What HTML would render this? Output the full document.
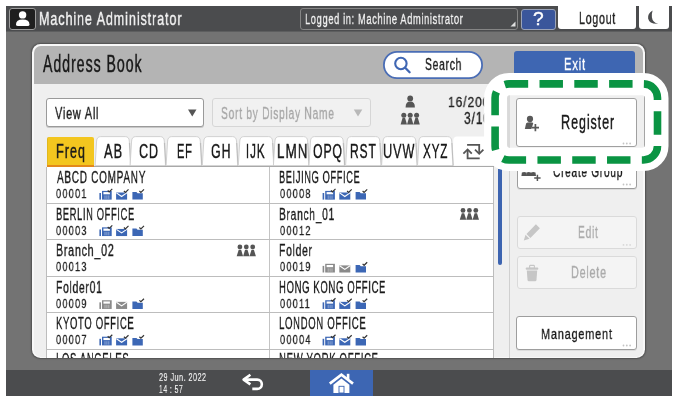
<!DOCTYPE html><html><head><meta charset="utf-8"><style>
html,body{margin:0;padding:0;width:675px;height:400px;overflow:hidden;background:#fff;}
body{position:relative;font-family:"Liberation Sans",sans-serif;}
.t{position:absolute;white-space:nowrap;line-height:1;transform-origin:0 0;will-change:transform;}
svg{position:absolute;left:0;top:0;}
</style></head><body>
<div style="position:absolute;left:6px;top:6px;width:666px;height:390px;background:#737373;"></div>
<div style="position:absolute;left:6px;top:6px;width:666px;height:25px;background:#4b4c4e;"></div>
<div style="position:absolute;left:6px;top:31px;width:666px;height:1px;background:#5d5e5f;"></div>
<div style="position:absolute;left:9px;top:8px;width:27px;height:22px;background:#1f1f1f;border:1px solid #9c9c9c;border-radius:3px;box-sizing:border-box;"></div>
<svg width="675" height="400"><circle cx="22.6" cy="14.9" r="3.7" fill="#fff"/><path d="M16 24.6 Q16 19.6 22.7 19.6 Q29.5 19.6 29.5 24.6 Q29.5 26.1 27.5 26.1 H18 Q16 26.1 16 24.6 Z" fill="#fff"/></svg>
<div class="t" style="left:38.69px;top:9.65px;font-size:18.84px;letter-spacing:1.32px;transform:scaleX(0.6702);-webkit-text-stroke:0.40px currentColor;color:#f2f2f2;">Machine Administrator</div>
<div style="position:absolute;left:300px;top:8px;width:218px;height:22px;border:1px solid #858585;border-radius:3px;box-sizing:border-box;"></div>
<div class="t" style="left:304.86px;top:11.60px;font-size:14.06px;letter-spacing:0.98px;transform:scaleX(0.6604);-webkit-text-stroke:0.30px currentColor;color:#f2f2f2;">Logged in: Machine Administrator</div>
<svg width="675" height="400"><path d="M515.5 21.5 L515.5 26.5 L510.5 26.5 Z" fill="#e0e0e0"/></svg>
<div style="position:absolute;left:521px;top:8.5px;width:35px;height:21.0px;background:#3a569b;border:1px solid #9aa3b8;border-radius:3px;box-sizing:border-box;"></div>
<div class="t" style="left:532.93px;top:10.14px;font-size:18.26px;letter-spacing:1.28px;transform:scaleX(1.0491);-webkit-text-stroke:0.38px currentColor;color:#fff;">?</div>
<div style="position:absolute;left:558px;top:6px;width:77.5px;height:23px;background:#fff;border-radius:0 0 3px 3px;"></div>
<div class="t" style="left:578.75px;top:9.86px;font-size:16.23px;letter-spacing:1.14px;transform:scaleX(0.6560);-webkit-text-stroke:0.34px currentColor;color:#222;">Logout</div>
<div style="position:absolute;left:638.5px;top:6px;width:30.0px;height:23px;background:#fff;border-radius:0 0 3px 3px;"></div>
<svg width="675" height="400"><path d="M652.6 10.4 Q647.2 14 648.1 18.6 Q649.3 24.3 658.2 23.8 Q652.6 22.6 651.9 17.2 Q651.6 13.4 652.6 10.4 Z" fill="#4b4c4e"/></svg>
<div style="position:absolute;left:32.3px;top:43.8px;width:612.7px;height:314.2px;background:#f8f8f8;border-radius:8.5px;box-shadow:0 0 1.5px 0.5px rgba(0,0,0,0.3);"></div>
<div style="position:absolute;left:34px;top:45.6px;width:609.4px;height:311.0px;background:#efefef;border-radius:7px;"></div>
<div style="position:absolute;left:34px;top:45.6px;width:609.4px;height:38.4px;background:#b4b4b4;border-radius:7px 7px 0 0;"></div>
<div class="t" style="left:43.00px;top:52.85px;font-size:23.33px;letter-spacing:1.63px;transform:scaleX(0.6039);-webkit-text-stroke:0.49px currentColor;color:#1a1a1a;">Address Book</div>
<svg width="675" height="400"><rect x="383.9" y="51.9" width="98.2" height="26.2" rx="13.1" fill="#fff" stroke="#4a6db5" stroke-width="1.8"/></svg>
<svg width="675" height="400"><circle cx="400.9" cy="63.5" r="5.7" fill="none" stroke="#3f66b3" stroke-width="2.1"/><path d="M405.2 67.8 L409.6 72.2" stroke="#3f66b3" stroke-width="2.3" stroke-linecap="round"/></svg>
<div class="t" style="left:425.14px;top:56.51px;font-size:15.94px;letter-spacing:1.12px;transform:scaleX(0.6476);-webkit-text-stroke:0.33px currentColor;color:#222;">Search</div>
<div style="position:absolute;left:514.3px;top:50.8px;width:121.0px;height:28.200000000000003px;background:#3e66b2;border-radius:3px;"></div>
<div class="t" style="left:563.79px;top:56.12px;font-size:17.10px;letter-spacing:1.20px;transform:scaleX(0.6617);-webkit-text-stroke:0.36px currentColor;color:#fff;">Exit</div>
<div style="position:absolute;left:508.5px;top:84px;width:1.5px;height:274px;background:#d0d0d0;"></div>
<div style="position:absolute;left:46px;top:98px;width:158px;height:29px;background:#fff;border:1px solid #9a9a9a;border-radius:3px;box-sizing:border-box;box-shadow:0 1px 0 #c8c8c8;"></div>
<div class="t" style="left:54.65px;top:104.96px;font-size:16.23px;letter-spacing:1.14px;transform:scaleX(0.6738);-webkit-text-stroke:0.34px currentColor;color:#222;">View All</div>
<svg width="675" height="400"><path d="M188 109.5 L196.5 109.5 L192.25 116.5 Z" fill="#555"/></svg>
<div style="position:absolute;left:212px;top:98px;width:159px;height:29px;background:#f1f1f1;border:1px solid #d6d6d6;border-radius:3px;box-sizing:border-box;"></div>
<div class="t" style="left:220.54px;top:104.96px;font-size:16.23px;letter-spacing:1.14px;transform:scaleX(0.6327);-webkit-text-stroke:0.34px currentColor;color:#a8a8a8;">Sort by Display Name</div>
<svg width="675" height="400"><path d="M353.8 109.5 L362.3 109.5 L358 116.5 Z" fill="#b8b8b8"/></svg>
<svg width="675" height="400" fill="#555">
<circle cx="410.2" cy="98.4" r="2.9"/><path d="M405.6 107.4 Q405.6 101.6 410.2 101.6 Q414.9 101.6 414.9 107.4 Z"/>
<circle cx="403.8" cy="115.3" r="2.5"/><circle cx="410.2" cy="115.3" r="2.5"/><circle cx="416.6" cy="115.3" r="2.5"/>
<path d="M400.6 124.6 L402.6 117.8 L405 117.8 L407 124.6 Z M407 124.6 L409 117.8 L411.4 117.8 L413.4 124.6 Z M413.4 124.6 L415.4 117.8 L417.8 117.8 L419.8 124.6 Z"/>
</svg>
<div class="t" style="left:448.49px;top:94.80px;font-size:14.06px;letter-spacing:0.98px;transform:scaleX(0.8657);-webkit-text-stroke:0.30px currentColor;color:#222;">16/200</div>
<div class="t" style="left:464.02px;top:109.88px;font-size:16.09px;letter-spacing:1.13px;transform:scaleX(0.7489);-webkit-text-stroke:0.34px currentColor;color:#222;">3/10</div>
<div style="position:absolute;left:46.7px;top:136.8px;width:47.099999999999994px;height:30.399999999999977px;background:#f3c61f;border-radius:2px 2px 0 0;box-shadow:inset 0 -1.9px 0 #e3891b, inset 0.6px 0 0 rgba(0,0,0,0.12);"></div>
<div class="t" style="left:55.58px;top:141.42px;font-size:20.29px;letter-spacing:1.42px;transform:scaleX(0.6300);-webkit-text-stroke:0.43px currentColor;color:#1a1a1a;">Freq</div>
<svg width="675" height="400"><path d="M452.2 165.6 L453.3 140 Q453.6 136.4 457 136.4 H494 V165.6 Z" fill="#fff"/><path d="M95.10000000000001 165.6 L96.60000000000001 141 Q96.9 136.6 100.7 136.6 H125.19999999999999 Q129.0 136.6 129.29999999999998 141 L130.79999999999998 165.6 Z" fill="#fff" stroke="#cdcdcd" stroke-width="0.9"/><path d="M129.5 143 L130.7 165.6" stroke="rgba(0,0,0,0.10)" stroke-width="1.6"/><path d="M130.1 165.6 L131.6 141 Q131.89999999999998 136.6 135.7 136.6 H160.2 Q164.0 136.6 164.29999999999998 141 L165.79999999999998 165.6 Z" fill="#fff" stroke="#cdcdcd" stroke-width="0.9"/><path d="M164.5 143 L165.7 165.6" stroke="rgba(0,0,0,0.10)" stroke-width="1.6"/><path d="M166.1 165.6 L167.6 141 Q167.89999999999998 136.6 171.7 136.6 H196.2 Q200.0 136.6 200.29999999999998 141 L201.79999999999998 165.6 Z" fill="#fff" stroke="#cdcdcd" stroke-width="0.9"/><path d="M200.5 143 L201.7 165.6" stroke="rgba(0,0,0,0.10)" stroke-width="1.6"/><path d="M202.3 165.6 L203.8 141 Q204.1 136.6 207.9 136.6 H232.4 Q236.20000000000002 136.6 236.5 141 L238.0 165.6 Z" fill="#fff" stroke="#cdcdcd" stroke-width="0.9"/><path d="M236.70000000000002 143 L237.9 165.6" stroke="rgba(0,0,0,0.10)" stroke-width="1.6"/><path d="M238.3 165.6 L239.8 141 Q240.1 136.6 243.9 136.6 H268.4 Q272.2 136.6 272.5 141 L274.0 165.6 Z" fill="#fff" stroke="#cdcdcd" stroke-width="0.9"/><path d="M272.7 143 L273.9 165.6" stroke="rgba(0,0,0,0.10)" stroke-width="1.6"/><path d="M273.4 165.6 L274.9 141 Q275.2 136.6 279 136.6 H303.5 Q307.3 136.6 307.6 141 L309.1 165.6 Z" fill="#fff" stroke="#cdcdcd" stroke-width="0.9"/><path d="M307.8 143 L309.0 165.6" stroke="rgba(0,0,0,0.10)" stroke-width="1.6"/><path d="M309.0 165.6 L310.5 141 Q310.8 136.6 314.6 136.6 H339.1 Q342.90000000000003 136.6 343.20000000000005 141 L344.70000000000005 165.6 Z" fill="#fff" stroke="#cdcdcd" stroke-width="0.9"/><path d="M343.40000000000003 143 L344.6 165.6" stroke="rgba(0,0,0,0.10)" stroke-width="1.6"/><path d="M345.59999999999997 165.6 L347.09999999999997 141 Q347.4 136.6 351.2 136.6 H375.7 Q379.5 136.6 379.8 141 L381.3 165.6 Z" fill="#fff" stroke="#cdcdcd" stroke-width="0.9"/><path d="M380.0 143 L381.2 165.6" stroke="rgba(0,0,0,0.10)" stroke-width="1.6"/><path d="M381.59999999999997 165.6 L383.09999999999997 141 Q383.4 136.6 387.2 136.6 H411.7 Q415.5 136.6 415.8 141 L417.3 165.6 Z" fill="#fff" stroke="#cdcdcd" stroke-width="0.9"/><path d="M416.0 143 L417.2 165.6" stroke="rgba(0,0,0,0.10)" stroke-width="1.6"/><path d="M417.5 165.6 L419.0 141 Q419.3 136.6 423.1 136.6 H447.6 Q451.40000000000003 136.6 451.70000000000005 141 L453.20000000000005 165.6 Z" fill="#fff" stroke="#cdcdcd" stroke-width="0.9"/><path d="M451.90000000000003 143 L453.1 165.6" stroke="rgba(0,0,0,0.10)" stroke-width="1.6"/></svg>
<div class="t" style="left:104.00px;top:141.38px;font-size:20.58px;letter-spacing:1.44px;transform:scaleX(0.6250);-webkit-text-stroke:0.43px currentColor;color:#1a1a1a;">AB</div>
<div class="t" style="left:138.77px;top:141.38px;font-size:20.58px;letter-spacing:1.44px;transform:scaleX(0.6134);-webkit-text-stroke:0.43px currentColor;color:#1a1a1a;">CD</div>
<div class="t" style="left:176.81px;top:141.38px;font-size:20.58px;letter-spacing:1.44px;transform:scaleX(0.5377);-webkit-text-stroke:0.43px currentColor;color:#1a1a1a;">EF</div>
<div class="t" style="left:210.58px;top:141.38px;font-size:20.58px;letter-spacing:1.44px;transform:scaleX(0.6027);-webkit-text-stroke:0.43px currentColor;color:#1a1a1a;">GH</div>
<div class="t" style="left:246.14px;top:141.38px;font-size:20.58px;letter-spacing:1.44px;transform:scaleX(0.5713);-webkit-text-stroke:0.43px currentColor;color:#1a1a1a;">IJK</div>
<div class="t" style="left:276.82px;top:141.38px;font-size:20.58px;letter-spacing:1.44px;transform:scaleX(0.6572);-webkit-text-stroke:0.43px currentColor;color:#1a1a1a;">LMN</div>
<div class="t" style="left:313.35px;top:141.38px;font-size:20.58px;letter-spacing:1.44px;transform:scaleX(0.5964);-webkit-text-stroke:0.43px currentColor;color:#1a1a1a;">OPQ</div>
<div class="t" style="left:350.24px;top:141.38px;font-size:20.58px;letter-spacing:1.44px;transform:scaleX(0.5850);-webkit-text-stroke:0.43px currentColor;color:#1a1a1a;">RST</div>
<div class="t" style="left:383.35px;top:141.38px;font-size:20.58px;letter-spacing:1.44px;transform:scaleX(0.6160);-webkit-text-stroke:0.43px currentColor;color:#1a1a1a;">UVW</div>
<div class="t" style="left:423.21px;top:141.38px;font-size:20.58px;letter-spacing:1.44px;transform:scaleX(0.5687);-webkit-text-stroke:0.43px currentColor;color:#1a1a1a;">XYZ</div>
<svg width="675" height="400"><g fill="none" stroke="#555" stroke-width="1.8"><path d="M467.1 144.9 L479.2 144.9 L479.2 153"/><path d="M475 149.6 L479.2 153.8 L483.4 149.6"/><path d="M479.7 158.4 L467.6 158.4 L467.6 150"/><path d="M463.4 153.6 L467.6 149.4 L471.8 153.6"/></g></svg>
<div style="position:absolute;left:0;top:0;width:675px;height:357.6px;overflow:hidden">
<div style="position:absolute;left:46px;top:167px;width:448px;height:191px;background:#fff;border-left:1px solid #bdbdbd;border-right:1px solid #bdbdbd;box-sizing:border-box;"></div>
<div style="position:absolute;left:93.8px;top:165.5px;width:400.2px;height:1.5px;background:#a9a9a9;"></div>
<div style="position:absolute;left:269px;top:167px;width:1px;height:191px;background:#c4c4c4;"></div>
<div style="position:absolute;left:46px;top:202.75px;width:448px;height:1.0px;background:#bdbdbd;"></div>
<div style="position:absolute;left:46px;top:239.2px;width:448px;height:1.0px;background:#bdbdbd;"></div>
<div style="position:absolute;left:46px;top:275.65px;width:448px;height:1.0px;background:#bdbdbd;"></div>
<div style="position:absolute;left:46px;top:312.1px;width:448px;height:1.0px;background:#bdbdbd;"></div>
<div style="position:absolute;left:46px;top:348.55px;width:448px;height:1.0px;background:#bdbdbd;"></div>
<div style="position:absolute;left:498px;top:169px;width:4px;height:95.69999999999999px;background:#3d64b0;border-radius:0 0 2px 2px;"></div>
<div class="t" style="left:57.00px;top:170.15px;font-size:15.65px;letter-spacing:1.10px;transform:scaleX(0.6411);-webkit-text-stroke:0.33px currentColor;color:#1a1a1a;">ABCD COMPANY</div>
<div class="t" style="left:56.33px;top:187.21px;font-size:13.33px;letter-spacing:1.73px;transform:scaleX(0.6928);-webkit-text-stroke:0.28px currentColor;color:#222;">00001</div>
<div class="t" style="left:279.46px;top:170.15px;font-size:15.65px;letter-spacing:1.10px;transform:scaleX(0.5896);-webkit-text-stroke:0.33px currentColor;color:#1a1a1a;">BEIJING OFFICE</div>
<div class="t" style="left:279.53px;top:187.21px;font-size:13.33px;letter-spacing:1.73px;transform:scaleX(0.6928);-webkit-text-stroke:0.28px currentColor;color:#222;">00008</div>
<div class="t" style="left:56.26px;top:206.60px;font-size:15.65px;letter-spacing:1.10px;transform:scaleX(0.5949);-webkit-text-stroke:0.33px currentColor;color:#1a1a1a;">BERLIN OFFICE</div>
<div class="t" style="left:56.33px;top:223.66px;font-size:13.33px;letter-spacing:1.73px;transform:scaleX(0.6928);-webkit-text-stroke:0.28px currentColor;color:#222;">00003</div>
<div class="t" style="left:279.38px;top:206.60px;font-size:15.65px;letter-spacing:1.10px;transform:scaleX(0.6541);-webkit-text-stroke:0.33px currentColor;color:#1a1a1a;">Branch_01</div>
<div class="t" style="left:279.53px;top:223.66px;font-size:13.33px;letter-spacing:1.73px;transform:scaleX(0.6928);-webkit-text-stroke:0.28px currentColor;color:#222;">00012</div>
<div class="t" style="left:56.14px;top:243.05px;font-size:15.65px;letter-spacing:1.10px;transform:scaleX(0.6838);-webkit-text-stroke:0.33px currentColor;color:#1a1a1a;">Branch_02</div>
<div class="t" style="left:56.33px;top:260.11px;font-size:13.33px;letter-spacing:1.73px;transform:scaleX(0.6928);-webkit-text-stroke:0.28px currentColor;color:#222;">00013</div>
<div class="t" style="left:279.37px;top:243.05px;font-size:15.65px;letter-spacing:1.10px;transform:scaleX(0.6638);-webkit-text-stroke:0.33px currentColor;color:#1a1a1a;">Folder</div>
<div class="t" style="left:279.53px;top:260.11px;font-size:13.33px;letter-spacing:1.73px;transform:scaleX(0.6928);-webkit-text-stroke:0.28px currentColor;color:#222;">00019</div>
<div class="t" style="left:56.17px;top:279.50px;font-size:15.65px;letter-spacing:1.10px;transform:scaleX(0.6604);-webkit-text-stroke:0.33px currentColor;color:#1a1a1a;">Folder01</div>
<div class="t" style="left:56.33px;top:296.56px;font-size:13.33px;letter-spacing:1.73px;transform:scaleX(0.6928);-webkit-text-stroke:0.28px currentColor;color:#222;">00009</div>
<div class="t" style="left:279.44px;top:279.50px;font-size:15.65px;letter-spacing:1.10px;transform:scaleX(0.6061);-webkit-text-stroke:0.33px currentColor;color:#1a1a1a;">HONG KONG OFFICE</div>
<div class="t" style="left:279.53px;top:296.56px;font-size:13.33px;letter-spacing:1.73px;transform:scaleX(0.6928);-webkit-text-stroke:0.28px currentColor;color:#222;">00011</div>
<div class="t" style="left:56.24px;top:315.95px;font-size:15.65px;letter-spacing:1.10px;transform:scaleX(0.6064);-webkit-text-stroke:0.33px currentColor;color:#1a1a1a;">KYOTO OFFICE</div>
<div class="t" style="left:56.33px;top:333.01px;font-size:13.33px;letter-spacing:1.73px;transform:scaleX(0.6928);-webkit-text-stroke:0.28px currentColor;color:#222;">00007</div>
<div class="t" style="left:279.43px;top:315.95px;font-size:15.65px;letter-spacing:1.10px;transform:scaleX(0.6114);-webkit-text-stroke:0.33px currentColor;color:#1a1a1a;">LONDON OFFICE</div>
<div class="t" style="left:279.53px;top:333.01px;font-size:13.33px;letter-spacing:1.73px;transform:scaleX(0.6928);-webkit-text-stroke:0.28px currentColor;color:#222;">00004</div>
<div class="t" style="left:56.24px;top:352.40px;font-size:15.65px;letter-spacing:1.10px;transform:scaleX(0.6070);-webkit-text-stroke:0.33px currentColor;color:#1a1a1a;">LOS ANGELES</div>
<div class="t" style="left:56.33px;top:369.46px;font-size:13.33px;letter-spacing:1.73px;transform:scaleX(0.6928);-webkit-text-stroke:0.28px currentColor;color:#222;">00010</div>
<div class="t" style="left:279.43px;top:352.40px;font-size:15.65px;letter-spacing:1.10px;transform:scaleX(0.6111);-webkit-text-stroke:0.33px currentColor;color:#1a1a1a;">NEW YORK OFFICE</div>
<div class="t" style="left:279.53px;top:369.46px;font-size:13.33px;letter-spacing:1.73px;transform:scaleX(0.6928);-webkit-text-stroke:0.28px currentColor;color:#222;">00005</div>
<svg width="675" height="400"><rect x="99.4" y="193.0" width="1.6" height="6.6" fill="#3c67b5"/><rect x="102.0" y="190.9" width="9.7" height="8.7" fill="#3c67b5"/><rect x="103.4" y="192.1" width="6.5" height="2.2" fill="#fff"/><path d="M105.0 195.4V198.9 M106.9 195.4V198.9 M108.80000000000001 195.4V198.9" stroke="#fff" stroke-width="0.7" opacity="0.6"/><path d="M107.7 190.5 L109.2 191.9 L112.3 188.9" fill="none" stroke="#333" stroke-width="1.2"/><rect x="116.10000000000001" y="192.5" width="11" height="7.1" fill="#3c67b5"/><path d="M116.4 192.9 L121.60000000000001 196.5 L126.80000000000001 192.9" fill="none" stroke="#fff" stroke-width="1.1"/><path d="M123.9 191.0 L125.4 192.4 L128.5 189.4" fill="none" stroke="#333" stroke-width="1.2"/><path d="M132.4 192.1 L136.4 192.1 L137.6 193.3 L142.8 193.3 L142.8 199.6 L132.4 199.6 Z" fill="#3c67b5"/><path d="M139.4 191.0 L140.9 192.4 L144.0 189.4" fill="none" stroke="#333" stroke-width="1.2"/><rect x="322.59999999999997" y="193.0" width="1.6" height="6.6" fill="#3c67b5"/><rect x="325.2" y="190.9" width="9.7" height="8.7" fill="#3c67b5"/><rect x="326.59999999999997" y="192.1" width="6.5" height="2.2" fill="#fff"/><path d="M328.2 195.4V198.9 M330.09999999999997 195.4V198.9 M331.99999999999994 195.4V198.9" stroke="#fff" stroke-width="0.7" opacity="0.6"/><path d="M330.9 190.5 L332.4 191.9 L335.5 188.9" fill="none" stroke="#333" stroke-width="1.2"/><rect x="339.29999999999995" y="192.5" width="11" height="7.1" fill="#3c67b5"/><path d="M339.59999999999997 192.9 L344.79999999999995 196.5 L349.99999999999994 192.9" fill="none" stroke="#fff" stroke-width="1.1"/><path d="M347.09999999999997 191.0 L348.59999999999997 192.4 L351.7 189.4" fill="none" stroke="#333" stroke-width="1.2"/><path d="M355.59999999999997 192.1 L359.59999999999997 192.1 L360.79999999999995 193.3 L365.99999999999994 193.3 L365.99999999999994 199.6 L355.59999999999997 199.6 Z" fill="#3c67b5"/><path d="M362.59999999999997 191.0 L364.09999999999997 192.4 L367.2 189.4" fill="none" stroke="#333" stroke-width="1.2"/><rect x="99.4" y="229.45" width="1.6" height="6.6" fill="#3c67b5"/><rect x="102.0" y="227.35" width="9.7" height="8.7" fill="#3c67b5"/><rect x="103.4" y="228.54999999999998" width="6.5" height="2.2" fill="#fff"/><path d="M105.0 231.85V235.35 M106.9 231.85V235.35 M108.80000000000001 231.85V235.35" stroke="#fff" stroke-width="0.7" opacity="0.6"/><path d="M107.7 226.95 L109.2 228.35 L112.3 225.35" fill="none" stroke="#333" stroke-width="1.2"/><rect x="116.10000000000001" y="228.95" width="11" height="7.1" fill="#3c67b5"/><path d="M116.4 229.35 L121.60000000000001 232.95 L126.80000000000001 229.35" fill="none" stroke="#fff" stroke-width="1.1"/><path d="M123.9 227.45 L125.4 228.85 L128.5 225.85" fill="none" stroke="#333" stroke-width="1.2"/><path d="M132.4 228.54999999999998 L136.4 228.54999999999998 L137.6 229.75 L142.8 229.75 L142.8 236.04999999999998 L132.4 236.04999999999998 Z" fill="#3c67b5"/><path d="M139.4 227.45 L140.9 228.85 L144.0 225.85" fill="none" stroke="#333" stroke-width="1.2"/><circle cx="463.0" cy="210.45" r="2.4" fill="#555"/><path d="M459.8 219.85 L461.8 213.25 L464.2 213.25 L466.2 219.85 Z" fill="#555"/><circle cx="469.4" cy="210.45" r="2.4" fill="#555"/><path d="M466.2 219.85 L468.2 213.25 L470.59999999999997 213.25 L472.59999999999997 219.85 Z" fill="#555"/><circle cx="475.8" cy="210.45" r="2.4" fill="#555"/><path d="M472.6 219.85 L474.6 213.25 L477.0 213.25 L479.0 219.85 Z" fill="#555"/><circle cx="239.9" cy="246.9" r="2.4" fill="#555"/><path d="M236.70000000000002 256.3 L238.70000000000002 249.70000000000002 L241.1 249.70000000000002 L243.1 256.3 Z" fill="#555"/><circle cx="246.3" cy="246.9" r="2.4" fill="#555"/><path d="M243.10000000000002 256.3 L245.10000000000002 249.70000000000002 L247.5 249.70000000000002 L249.5 256.3 Z" fill="#555"/><circle cx="252.70000000000002" cy="246.9" r="2.4" fill="#555"/><path d="M249.50000000000003 256.3 L251.50000000000003 249.70000000000002 L253.9 249.70000000000002 L255.9 256.3 Z" fill="#555"/><rect x="322.59999999999997" y="265.90000000000003" width="1.6" height="6.6" fill="#8a8a8a"/><rect x="325.2" y="263.8" width="9.7" height="8.7" fill="#8a8a8a"/><rect x="326.59999999999997" y="265.0" width="6.5" height="2.2" fill="#fff"/><path d="M328.2 268.3V271.8 M330.09999999999997 268.3V271.8 M331.99999999999994 268.3V271.8" stroke="#fff" stroke-width="0.7" opacity="0.6"/><rect x="339.29999999999995" y="265.40000000000003" width="11" height="7.1" fill="#8a8a8a"/><path d="M339.59999999999997 265.8 L344.79999999999995 269.40000000000003 L349.99999999999994 265.8" fill="none" stroke="#fff" stroke-width="1.1"/><path d="M355.59999999999997 265.0 L359.59999999999997 265.0 L360.79999999999995 266.2 L365.99999999999994 266.2 L365.99999999999994 272.5 L355.59999999999997 272.5 Z" fill="#3c67b5"/><path d="M362.59999999999997 263.90000000000003 L364.09999999999997 265.3 L367.2 262.3" fill="none" stroke="#333" stroke-width="1.2"/><rect x="99.4" y="302.3500000000001" width="1.6" height="6.6" fill="#8a8a8a"/><rect x="102.0" y="300.25000000000006" width="9.7" height="8.7" fill="#8a8a8a"/><rect x="103.4" y="301.45000000000005" width="6.5" height="2.2" fill="#fff"/><path d="M105.0 304.75000000000006V308.25000000000006 M106.9 304.75000000000006V308.25000000000006 M108.80000000000001 304.75000000000006V308.25000000000006" stroke="#fff" stroke-width="0.7" opacity="0.6"/><rect x="116.10000000000001" y="301.8500000000001" width="11" height="7.1" fill="#8a8a8a"/><path d="M116.4 302.25000000000006 L121.60000000000001 305.8500000000001 L126.80000000000001 302.25000000000006" fill="none" stroke="#fff" stroke-width="1.1"/><path d="M132.4 301.45000000000005 L136.4 301.45000000000005 L137.6 302.65000000000003 L142.8 302.65000000000003 L142.8 308.95000000000005 L132.4 308.95000000000005 Z" fill="#3c67b5"/><path d="M139.4 300.3500000000001 L140.9 301.75000000000006 L144.0 298.75000000000006" fill="none" stroke="#333" stroke-width="1.2"/><rect x="322.59999999999997" y="302.3500000000001" width="1.6" height="6.6" fill="#3c67b5"/><rect x="325.2" y="300.25000000000006" width="9.7" height="8.7" fill="#3c67b5"/><rect x="326.59999999999997" y="301.45000000000005" width="6.5" height="2.2" fill="#fff"/><path d="M328.2 304.75000000000006V308.25000000000006 M330.09999999999997 304.75000000000006V308.25000000000006 M331.99999999999994 304.75000000000006V308.25000000000006" stroke="#fff" stroke-width="0.7" opacity="0.6"/><path d="M330.9 299.8500000000001 L332.4 301.25000000000006 L335.5 298.25000000000006" fill="none" stroke="#333" stroke-width="1.2"/><rect x="339.29999999999995" y="301.8500000000001" width="11" height="7.1" fill="#3c67b5"/><path d="M339.59999999999997 302.25000000000006 L344.79999999999995 305.8500000000001 L349.99999999999994 302.25000000000006" fill="none" stroke="#fff" stroke-width="1.1"/><path d="M347.09999999999997 300.3500000000001 L348.59999999999997 301.75000000000006 L351.7 298.75000000000006" fill="none" stroke="#333" stroke-width="1.2"/><path d="M355.59999999999997 301.45000000000005 L359.59999999999997 301.45000000000005 L360.79999999999995 302.65000000000003 L365.99999999999994 302.65000000000003 L365.99999999999994 308.95000000000005 L355.59999999999997 308.95000000000005 Z" fill="#3c67b5"/><path d="M362.59999999999997 300.3500000000001 L364.09999999999997 301.75000000000006 L367.2 298.75000000000006" fill="none" stroke="#333" stroke-width="1.2"/><rect x="99.4" y="338.80000000000007" width="1.6" height="6.6" fill="#3c67b5"/><rect x="102.0" y="336.70000000000005" width="9.7" height="8.7" fill="#3c67b5"/><rect x="103.4" y="337.90000000000003" width="6.5" height="2.2" fill="#fff"/><path d="M105.0 341.20000000000005V344.70000000000005 M106.9 341.20000000000005V344.70000000000005 M108.80000000000001 341.20000000000005V344.70000000000005" stroke="#fff" stroke-width="0.7" opacity="0.6"/><path d="M107.7 336.30000000000007 L109.2 337.70000000000005 L112.3 334.70000000000005" fill="none" stroke="#333" stroke-width="1.2"/><rect x="116.10000000000001" y="338.30000000000007" width="11" height="7.1" fill="#3c67b5"/><path d="M116.4 338.70000000000005 L121.60000000000001 342.30000000000007 L126.80000000000001 338.70000000000005" fill="none" stroke="#fff" stroke-width="1.1"/><path d="M123.9 336.80000000000007 L125.4 338.20000000000005 L128.5 335.20000000000005" fill="none" stroke="#333" stroke-width="1.2"/><path d="M132.4 337.90000000000003 L136.4 337.90000000000003 L137.6 339.1 L142.8 339.1 L142.8 345.40000000000003 L132.4 345.40000000000003 Z" fill="#3c67b5"/><path d="M139.4 336.80000000000007 L140.9 338.20000000000005 L144.0 335.20000000000005" fill="none" stroke="#333" stroke-width="1.2"/><rect x="322.59999999999997" y="338.80000000000007" width="1.6" height="6.6" fill="#3c67b5"/><rect x="325.2" y="336.70000000000005" width="9.7" height="8.7" fill="#3c67b5"/><rect x="326.59999999999997" y="337.90000000000003" width="6.5" height="2.2" fill="#fff"/><path d="M328.2 341.20000000000005V344.70000000000005 M330.09999999999997 341.20000000000005V344.70000000000005 M331.99999999999994 341.20000000000005V344.70000000000005" stroke="#fff" stroke-width="0.7" opacity="0.6"/><path d="M330.9 336.30000000000007 L332.4 337.70000000000005 L335.5 334.70000000000005" fill="none" stroke="#333" stroke-width="1.2"/><rect x="339.29999999999995" y="338.30000000000007" width="11" height="7.1" fill="#3c67b5"/><path d="M339.59999999999997 338.70000000000005 L344.79999999999995 342.30000000000007 L349.99999999999994 338.70000000000005" fill="none" stroke="#fff" stroke-width="1.1"/><path d="M347.09999999999997 336.80000000000007 L348.59999999999997 338.20000000000005 L351.7 335.20000000000005" fill="none" stroke="#333" stroke-width="1.2"/><path d="M355.59999999999997 337.90000000000003 L359.59999999999997 337.90000000000003 L360.79999999999995 339.1 L365.99999999999994 339.1 L365.99999999999994 345.40000000000003 L355.59999999999997 345.40000000000003 Z" fill="#3c67b5"/><path d="M362.59999999999997 336.80000000000007 L364.09999999999997 338.20000000000005 L367.2 335.20000000000005" fill="none" stroke="#333" stroke-width="1.2"/><rect x="99.4" y="375.25000000000006" width="1.6" height="6.6" fill="#3c67b5"/><rect x="102.0" y="373.15000000000003" width="9.7" height="8.7" fill="#3c67b5"/><rect x="103.4" y="374.35" width="6.5" height="2.2" fill="#fff"/><path d="M105.0 377.65000000000003V381.15000000000003 M106.9 377.65000000000003V381.15000000000003 M108.80000000000001 377.65000000000003V381.15000000000003" stroke="#fff" stroke-width="0.7" opacity="0.6"/><path d="M107.7 372.75000000000006 L109.2 374.15000000000003 L112.3 371.15000000000003" fill="none" stroke="#333" stroke-width="1.2"/><rect x="116.10000000000001" y="374.75000000000006" width="11" height="7.1" fill="#3c67b5"/><path d="M116.4 375.15000000000003 L121.60000000000001 378.75000000000006 L126.80000000000001 375.15000000000003" fill="none" stroke="#fff" stroke-width="1.1"/><path d="M123.9 373.25000000000006 L125.4 374.65000000000003 L128.5 371.65000000000003" fill="none" stroke="#333" stroke-width="1.2"/><path d="M132.4 374.35 L136.4 374.35 L137.6 375.55 L142.8 375.55 L142.8 381.85 L132.4 381.85 Z" fill="#3c67b5"/><path d="M139.4 373.25000000000006 L140.9 374.65000000000003 L144.0 371.65000000000003" fill="none" stroke="#333" stroke-width="1.2"/><rect x="322.59999999999997" y="375.25000000000006" width="1.6" height="6.6" fill="#3c67b5"/><rect x="325.2" y="373.15000000000003" width="9.7" height="8.7" fill="#3c67b5"/><rect x="326.59999999999997" y="374.35" width="6.5" height="2.2" fill="#fff"/><path d="M328.2 377.65000000000003V381.15000000000003 M330.09999999999997 377.65000000000003V381.15000000000003 M331.99999999999994 377.65000000000003V381.15000000000003" stroke="#fff" stroke-width="0.7" opacity="0.6"/><path d="M330.9 372.75000000000006 L332.4 374.15000000000003 L335.5 371.15000000000003" fill="none" stroke="#333" stroke-width="1.2"/><rect x="339.29999999999995" y="374.75000000000006" width="11" height="7.1" fill="#3c67b5"/><path d="M339.59999999999997 375.15000000000003 L344.79999999999995 378.75000000000006 L349.99999999999994 375.15000000000003" fill="none" stroke="#fff" stroke-width="1.1"/><path d="M347.09999999999997 373.25000000000006 L348.59999999999997 374.65000000000003 L351.7 371.65000000000003" fill="none" stroke="#333" stroke-width="1.2"/><path d="M355.59999999999997 374.35 L359.59999999999997 374.35 L360.79999999999995 375.55 L365.99999999999994 375.55 L365.99999999999994 381.85 L355.59999999999997 381.85 Z" fill="#3c67b5"/><path d="M362.59999999999997 373.25000000000006 L364.09999999999997 374.65000000000003 L367.2 371.65000000000003" fill="none" stroke="#333" stroke-width="1.2"/></svg>
</div>
<div style="position:absolute;left:516.5px;top:114px;width:120.79999999999995px;height:34px;background:#fff;border:1px solid #9d9d9d;border-radius:3px;box-sizing:border-box;box-shadow:0 1px 0 rgba(0,0,0,0.08);"></div>
<div style="position:absolute;left:516.5px;top:155px;width:120.79999999999995px;height:34px;background:#fff;border:1px solid #9d9d9d;border-radius:3px;box-sizing:border-box;box-shadow:0 1px 0 rgba(0,0,0,0.08);"></div>
<div class="t" style="left:553.29px;top:164.11px;font-size:15.94px;letter-spacing:1.12px;transform:scaleX(0.6371);-webkit-text-stroke:0.33px currentColor;color:#1a1a1a;">Create Group</div>
<div style="position:absolute;left:516.7px;top:215.6px;width:120.59999999999991px;height:33.80000000000001px;background:#f4f4f4;border:1px solid #dadada;border-radius:3px;box-sizing:border-box;"></div>
<div class="t" style="left:577.98px;top:224.36px;font-size:16.23px;letter-spacing:1.14px;transform:scaleX(0.6328);-webkit-text-stroke:0.34px currentColor;color:#ababab;">Edit</div>
<div style="position:absolute;left:516.7px;top:256.1px;width:120.59999999999991px;height:33.099999999999966px;background:#f4f4f4;border:1px solid #dadada;border-radius:3px;box-sizing:border-box;"></div>
<div class="t" style="left:570.53px;top:264.55px;font-size:16.96px;letter-spacing:1.19px;transform:scaleX(0.6390);-webkit-text-stroke:0.36px currentColor;color:#ababab;">Delete</div>
<div style="position:absolute;left:516.4px;top:316.1px;width:120.80000000000007px;height:34.099999999999966px;background:#fff;border:1px solid #9d9d9d;border-radius:3px;box-sizing:border-box;box-shadow:0 1px 0 rgba(0,0,0,0.08);"></div>
<div class="t" style="left:540.82px;top:325.97px;font-size:15.51px;letter-spacing:1.09px;transform:scaleX(0.7071);-webkit-text-stroke:0.33px currentColor;color:#1a1a1a;">Management</div>
<svg width="675" height="400"><circle cx="623.5" cy="184.5" r="0.9" fill="#c4c4c4"/><circle cx="626.8" cy="184.5" r="0.9" fill="#c4c4c4"/><circle cx="630.1" cy="184.5" r="0.9" fill="#c4c4c4"/><circle cx="623.5" cy="244.9" r="0.9" fill="#d8d8d8"/><circle cx="626.8" cy="244.9" r="0.9" fill="#d8d8d8"/><circle cx="630.1" cy="244.9" r="0.9" fill="#d8d8d8"/><circle cx="623.5" cy="345.5" r="0.9" fill="#c4c4c4"/><circle cx="626.8" cy="345.5" r="0.9" fill="#c4c4c4"/><circle cx="630.1" cy="345.5" r="0.9" fill="#c4c4c4"/><g fill="#555"><path d="M521.4 176 L521.9 172.6 Q524.1 171.3 526.3000000000001 172.6 L526.8000000000001 176 Z"/><path d="M526.0 176 L526.5 172.6 Q528.7 171.3 530.9000000000001 172.6 L531.4000000000001 176 Z"/><path d="M530.6 176 L531.1 172.6 Q533.3000000000001 171.3 535.5000000000001 172.6 L536.0000000000001 176 Z"/><path d="M534.2 177.9 H540.6 M537.4 174.7 V181.1" stroke="#555" stroke-width="1.5"/></g><path d="M523.8 240.4 L525.5 234.8 L529.5 238.8 Z M526.5 233.9 L535.9 224.3 L539.9 228.3 L530.4 237.9 Z" fill="#c6c6c6"/><g fill="#c6c6c6"><rect x="525.7" y="267.6" width="12.6" height="2.2" rx="1"/><rect x="529.6" y="265.4" width="4.8" height="2.8" rx="0.8" fill="none" stroke="#c6c6c6" stroke-width="1.1"/><path d="M526.8 270.6 H537.2 L536.5 280 Q536.4 281.3 535 281.3 H529 Q527.6 281.3 527.5 280 Z"/></g></svg>
<div style="position:absolute;left:6px;top:370px;width:666px;height:26px;background:#4b4c4e;"></div>
<div class="t" style="left:159.34px;top:371.61px;font-size:11.45px;letter-spacing:0.80px;transform:scaleX(0.6275);-webkit-text-stroke:0.24px currentColor;color:#f0f0f0;">29 Jun. 2022</div>
<div class="t" style="left:159.19px;top:384.31px;font-size:11.45px;letter-spacing:0.80px;transform:scaleX(0.5953);-webkit-text-stroke:0.24px currentColor;color:#f0f0f0;">14 : 57</div>
<svg width="675" height="400"><path d="M244 379.6 H257.2 A4.65 4.65 0 0 1 257.2 388.9 H252.3" fill="none" stroke="#fff" stroke-width="2.6"/><path d="M250.4 374.8 L243.6 379.6 L250.4 384.4" fill="none" stroke="#fff" stroke-width="2.6" stroke-linejoin="round"/></svg>
<div style="position:absolute;left:310.1px;top:370px;width:62.5px;height:26px;background:#3d66b3;"></div>
<svg width="675" height="400"><path d="M329.8 383.6 L341.4 374.6 L353 383.6" fill="none" stroke="#fff" stroke-width="2.7"/><rect x="346.8" y="373.8" width="2.6" height="5.5" fill="#fff"/><path d="M333.4 384.8 L341.4 378.6 L349.4 384.8 V393 H333.4 Z" fill="#fff"/><rect x="339" y="386.3" width="5" height="6.7" fill="#fff" stroke="#3d66b3" stroke-width="0.9"/></svg>
<svg width="675" height="400"><rect x="495.1" y="83.9" width="162.4" height="76.1" rx="14" fill="#fff" stroke="#fff" stroke-width="22"/></svg>
<div style="position:absolute;left:0;top:0;width:675px;height:400px;clip-path:inset(95.2px 30px 252.2px 507.1px round 3px);">
<div style="position:absolute;left:507.1px;top:95.2px;width:137.89999999999998px;height:52.60000000000001px;background:#efefef;"></div>
<div style="position:absolute;left:507.1px;top:95.2px;width:3.099999999999966px;height:52.60000000000001px;background:#d9d9d9;"></div>
<div style="position:absolute;left:643.6px;top:95.2px;width:1.3999999999999773px;height:52.60000000000001px;background:#a5a5a5;"></div>
<div style="position:absolute;left:516.4px;top:98.3px;width:121.0px;height:49.10000000000001px;background:#fff;border:1px solid #a0a0a0;border-radius:3px;box-sizing:border-box;"></div>
</div>
<div class="t" style="left:560.99px;top:111.70px;font-size:20.43px;letter-spacing:1.43px;transform:scaleX(0.6180);-webkit-text-stroke:0.43px currentColor;color:#1a1a1a;">Register</div>
<svg width="675" height="400"><g fill="#595959"><circle cx="530" cy="118.9" r="3.1"/><path d="M524.8 128.9 L526.2 123.2 Q527 122.2 530 122.2 Q532.6 122.2 533.3 123 L531.4 128.9 Z"/></g><path d="M531.8 127.7 H539 M535.4 124.1 V131.3" stroke="#595959" stroke-width="1.7"/><circle cx="623.5" cy="143.5" r="0.9" fill="#c4c4c4"/><circle cx="626.8" cy="143.5" r="0.9" fill="#c4c4c4"/><circle cx="630.1" cy="143.5" r="0.9" fill="#c4c4c4"/></svg>
<svg width="675" height="400"><path d="M539.5 83.9 H643.5 A14 14 0 0 1 657.5 97.9 V146 A14 14 0 0 1 643.5 160 H509.1 A14 14 0 0 1 495.1 146 V97.9 A14 14 0 0 1 509.1 83.9 Z" fill="none" stroke="#0a9443" stroke-width="7.6" pathLength="455" stroke-dasharray="23.6 11.4"/></svg>
